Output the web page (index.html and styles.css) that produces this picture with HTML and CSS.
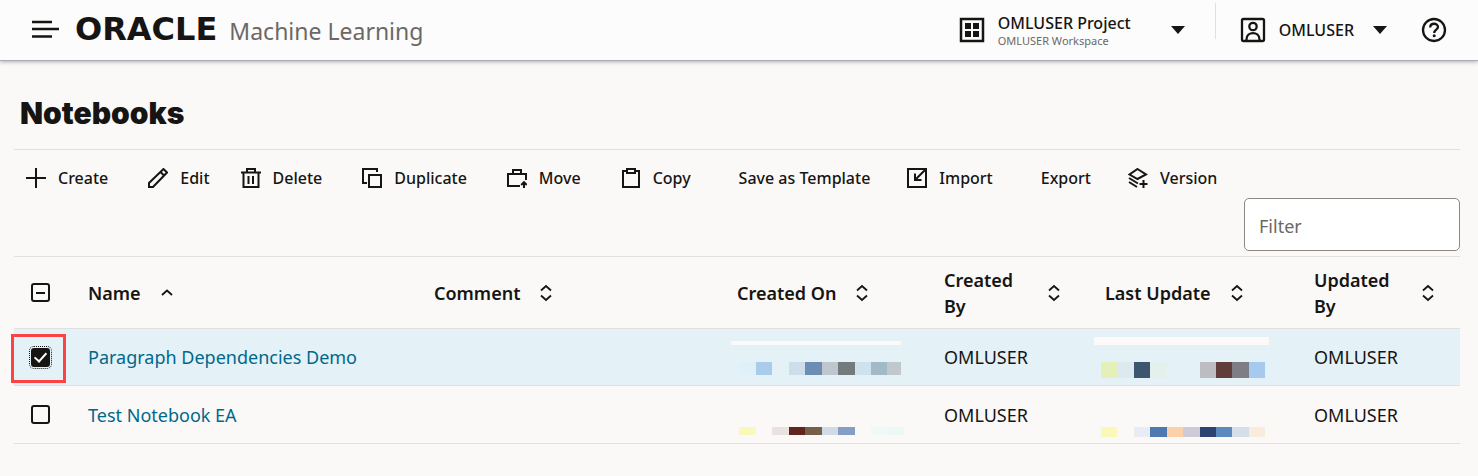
FILE: index.html
```html
<!DOCTYPE html>
<html lang="en">
<head>
<meta charset="utf-8">
<title>Notebooks</title>
<link rel="stylesheet" href="styles.css">
</head>
<body>
<svg class="defs" aria-hidden="true">
  <symbol id="sort" viewBox="0 0 16 18"><path d="M3 6.500 8 2l5 4.500M3 11.500 8 16l5-4.500" fill="none" stroke="currentColor" stroke-width="1.800"/></symbol>
</svg>
<header class="topbar">
  <button class="icon-button menu" aria-label="Navigation menu"><svg width="28" height="20" viewBox="0 0 28 20"><path d="M1 2h20M1 9h27M1 16.500h20" stroke="currentColor" stroke-width="2.300"/></svg></button>
  <div class="brand"><span class="logo">ORACLE</span><span class="product">Machine Learning</span></div>
  <button class="project">
    <svg width="26" height="26" viewBox="0 0 26 26"><path d="M2 2h22v22H2z" fill="none" stroke="currentColor" stroke-width="2.500"/><path d="M6 6h6v6H6zM14 6h6v6h-6zM6 14h6v6H6zM14 14h6v6h-6z" fill="currentColor"/></svg>
    <span class="project-text"><span class="project-name">OMLUSER Project</span><span class="workspace">OMLUSER Workspace</span></span>
    <svg class="caret" width="14" height="8" viewBox="0 0 14 8"><path d="M0 0h14L7 8z" fill="currentColor"/></svg>
  </button>
  <span class="divider"></span>
  <button class="user">
    <svg width="26" height="26" viewBox="0 0 26 26"><g fill="none" stroke="currentColor" stroke-width="2.300"><rect x="2" y="2" width="22" height="22" rx="1.500"/><circle cx="13" cy="9.500" r="3.700"/><path d="M6.500 23.500v-1c0-8.500 13-8.500 13 0v1"/></g></svg>
    <span>OMLUSER</span>
    <svg class="caret" width="14" height="8" viewBox="0 0 14 8"><path d="M0 0h14L7 8z" fill="currentColor"/></svg>
  </button>
  <button class="icon-button help" aria-label="Help"><svg width="26" height="26" viewBox="0 0 26 26"><g fill="none" stroke="currentColor" stroke-width="2.300"><circle cx="13" cy="13" r="11"/><path d="M9.200 10.500c0-5 7.800-4.800 7.800-.5 0 2.800-3.800 2.600-3.800 6"/></g><circle cx="13.200" cy="18.800" r="1.500" fill="currentColor"/></svg></button>
</header>
<main>
  <h1>Notebooks</h1>
  <div class="toolbar" role="toolbar" aria-label="Notebook actions">
    <button class="tool"><svg viewBox="0 0 20 20"><path d="M10 0v20M0 10h20"/></svg>Create</button>
    <button class="tool tight"><svg viewBox="0 0 20 20"><path d="M1 19v-4L15.500 1 19 4.500 5 19zM12.500 4l3.500 3.500"/></svg>Edit</button>
    <button class="tool"><svg viewBox="0 0 20 20"><path d="M0 4.500h20M6 4V1h8v3M2.500 5v14h15V5M7.500 8v8M12 8v8"/></svg>Delete</button>
    <button class="tool"><svg viewBox="0 0 20 20"><path d="M5 15H1V1h14v3M7 7h12v12H7z"/></svg>Duplicate</button>
    <button class="tool"><svg viewBox="0 0 20 20"><path d="M13 18H1V6h18v6M6 6V2h8v4"/><path d="M17 20v-5M14.200 17l2.800-2.800 2.800 2.800"/></svg>Move</button>
    <button class="tool"><svg viewBox="0 0 20 20"><path d="M6 3H2v16h16V3h-4M6 1h8v4H6z"/></svg>Copy</button>
    <button class="tool text-only">Save as Template</button>
    <button class="tool"><svg viewBox="0 0 20 20"><path d="M1 1h18v18H1zM18.500 1.500 8 12M8 5.500V12h6.500"/></svg>Import</button>
    <button class="tool text-only">Export</button>
    <button class="tool"><svg viewBox="0 0 20 20"><path d="M9.500 1 18 6.500 9.500 11 1.500 6.500zM1 10l9 5.500M1 14l8 5M15.500 12v8M11.500 16h8"/></svg>Version</button>
  </div>
  <div class="filter"><input type="text" placeholder="Filter" aria-label="Filter"></div>
  <table>
    <colgroup><col class="c-check"><col class="c-name"><col class="c-comment"><col class="c-created"><col class="c-by"><col class="c-update"><col class="c-by2"></colgroup>
    <thead>
      <tr>
        <th><input type="checkbox" class="box partial" aria-label="Select all notebooks"></th>
        <th><button class="sort"><span>Name</span><svg viewBox="0 0 16 18"><path d="M3 11 8 6.500l5 4.500" fill="none" stroke="currentColor" stroke-width="1.800"/></svg></button></th>
        <th><button class="sort"><span>Comment</span><svg><use href="#sort"/></svg></button></th>
        <th><button class="sort"><span>Created On</span><svg><use href="#sort"/></svg></button></th>
        <th><button class="sort two-line"><span>Created<br>By</span><svg><use href="#sort"/></svg></button></th>
        <th><button class="sort"><span>Last Update</span><svg><use href="#sort"/></svg></button></th>
        <th><button class="sort two-line"><span>Updated<br>By</span><svg><use href="#sort"/></svg></button></th>
      </tr>
    </thead>
    <tbody>
      <tr class="selected">
        <td class="marked"><input type="checkbox" class="box focused" aria-label="Select Paragraph Dependencies Demo" checked></td>
        <td><a href="#">Paragraph Dependencies Demo</a></td>
        <td></td>
        <td class="redacted"><svg width="190" height="56" viewBox="0 0 190 56" shape-rendering="crispEdges"><path fill="#fbfaf8" d="M6 12h170v4H6z"/><path fill="#e0f0f8" d="M15 33h16v13H15z"/><path fill="#a8ccea" d="M31 33h16v13H31z"/><path fill="#cddde9" d="M64 33h16v13H64z"/><path fill="#6d8db5" d="M80 33h17v13H80z"/><path fill="#bfc7ce" d="M97 33h16v13H97z"/><path fill="#757b7d" d="M113 33h17v13h-17z"/><path fill="#cde1ee" d="M130 33h16v13h-16z"/><path fill="#a2bac8" d="M146 33h16v13h-16z"/><path fill="#c0c8cb" d="M162 33h14v13h-14z"/></svg></td>
        <td>OMLUSER</td>
        <td class="redacted"><svg width="190" height="56" viewBox="0 0 190 56" shape-rendering="crispEdges"><path fill="#fbfaf8" d="M1 8h175v8H1z"/><path fill="#e4f0b8" d="M8 33h16v16H8z"/><path fill="#dceaf0" d="M24 33h17v16H24z"/><path fill="#3e5570" d="M41 33h16v16H41z"/><path fill="#e3f0ec" d="M57 33h17v16H57z"/><path fill="#bbbdc2" d="M107 33h16v16h-16z"/><path fill="#603d3b" d="M123 33h16v16h-16z"/><path fill="#7e7c85" d="M139 33h17v16h-17z"/><path fill="#a6caef" d="M156 33h16v16h-16z"/></svg></td>
        <td>OMLUSER</td>
      </tr>
      <tr>
        <td><input type="checkbox" class="box" aria-label="Select Test Notebook EA"></td>
        <td><a href="#">Test Notebook EA</a></td>
        <td></td>
        <td class="redacted"><svg width="190" height="57" viewBox="0 0 190 57" shape-rendering="crispEdges"><path fill="#fbf9b9" d="M14 41h17v8H14z"/><path fill="#eae2e1" d="M47 41h17v8H47z"/><path fill="#60261d" d="M64 41h16v8H64z"/><path fill="#75604c" d="M80 41h17v8H80z"/><path fill="#d2dae8" d="M97 41h16v8H97z"/><path fill="#839fc6" d="M113 41h17v8h-17z"/><path fill="#f1f8f8" d="M146 41h16v8h-16z"/><path fill="#ebf8f6" d="M162 41h17v8h-17z"/></svg></td>
        <td>OMLUSER</td>
        <td class="redacted"><svg width="190" height="57" viewBox="0 0 190 57" shape-rendering="crispEdges"><path fill="#fbf8b9" d="M8 41h16v10H8z"/><path fill="#e9ecf4" d="M41 41h16v10H41z"/><path fill="#4e78b0" d="M57 41h17v10H57z"/><path fill="#fbd1a9" d="M74 41h16v10H74z"/><path fill="#cccbd6" d="M90 41h17v10H90z"/><path fill="#2e4173" d="M107 41h16v10h-16z"/><path fill="#5b89bd" d="M123 41h16v10h-16z"/><path fill="#d3dee8" d="M139 41h17v10h-17z"/><path fill="#faecda" d="M156 41h16v10h-16z"/></svg></td>
        <td>OMLUSER</td>
      </tr>
    </tbody>
  </table>
</main>
</body>
</html>
```
FILE: styles.css
```css
* { box-sizing: border-box; }
body {
  margin: 0;
  background: #fbf9f8;
  color: #161513;
  font-family: "Noto Sans", "Open Sans", sans-serif;
  font-size: 18px;
}
.defs { position: absolute; width: 0; height: 0; }
button {
  display: flex;
  align-items: center;
  border: 0;
  padding: 0;
  background: none;
  color: inherit;
  font-family: inherit;
  text-align: left;
  white-space: nowrap;
}
svg { display: block; flex: none; }

.topbar {
  display: flex;
  align-items: center;
  height: 61px;
  padding: 0 31px;
  background: #fcfcfc;
  border-bottom: 1px solid #a9aebd;
  box-shadow: 0 1px 4px rgba(0, 0, 0, 0.3);
}
.brand { display: flex; flex: 1; align-items: baseline; gap: 12px; margin-left: 16px; }
.logo { font: bold 32px/40px "DejaVu Sans", sans-serif; }
.product { font-size: 23px; line-height: 40px; color: #6b6866; }
.project { gap: 13px; padding-right: 30px; }
.project-text { display: flex; flex-direction: column; width: 144px; }
.project-name { font-size: 16px; font-weight: 500; line-height: 20px; padding-top: 2px; }
.workspace { font-size: 11px; line-height: 16px; color: #6b6866; }
.project .caret { margin-left: 16px; }
.divider {
  align-self: flex-start;
  width: 1px;
  height: 36px;
  margin: 3px 24px 0 0;
  background: #e2e0de;
}
.user { gap: 13px; font-size: 16px; font-weight: 500; }
.user .caret { margin-left: 6px; }
.help { margin-left: 34px; }

main { padding: 32px 18px 32px 14px; }
h1 {
  margin: 0 0 16px;
  padding-left: 6px;
  font: 900 30px/40px Inter, sans-serif;
}
.toolbar {
  display: flex;
  align-items: center;
  gap: 16px;
  height: 49px;
  padding-top: 7px;
  border-top: 1px solid #e2e0de;
}
.tool { gap: 12px; padding: 0 12px; height: 40px; font-size: 16px; font-weight: 500; }
.tool svg { width: 20px; height: 20px; fill: none; stroke: currentColor; stroke-width: 2; }
.tight { padding-right: 3px; }
.text-only { padding: 0 9px 0 20px; }
.filter { display: flex; justify-content: flex-end; padding-bottom: 5px; }
.filter input {
  width: 216px;
  height: 53px;
  padding: 2px 14px 0;
  border: 1px solid #8b8886;
  border-radius: 5px;
  background: #fff;
  font: inherit;
}
.filter input::placeholder { color: #6b6866; opacity: 1; }

table { width: 100%; table-layout: fixed; border-collapse: collapse; border-top: 1px solid #e2e0de; }
.c-check { width: 62px; }
.c-name { width: 346px; }
.c-comment { width: 303px; }
.c-created { width: 207px; }
.c-by { width: 161px; }
.c-update { width: 209px; }
.c-by2 { width: 158px; }
th, td { padding: 0 12px; text-align: left; border-bottom: 1px solid #e2e0de; }
th { height: 72px; }
td { height: 58px; }
.selected td { height: 57px; }
td.redacted { padding: 0; vertical-align: top; }
td a { color: #00688c; text-decoration: none; }
.selected { background: #e4f1f7; }
.sort { gap: 18px; font-size: 18px; font-weight: 600; line-height: 26px; }
.sort svg { width: 16px; height: 18px; }
.two-line span { min-width: 84px; }
th:last-child .two-line span { min-width: 88px; }

.box {
  appearance: none;
  display: block;
  width: 19px;
  height: 19px;
  margin: 0 0 0 5px;
  border: 2px solid #161513;
  border-radius: 3px;
}
.partial { display: grid; place-items: center; }
.partial::after { content: ""; width: 9px; height: 2px; background: #161513; }
.box:checked { display: grid; place-items: center; background: #161513; }
.box:checked::after {
  content: "";
  width: 5px;
  height: 10px;
  border: solid #fff;
  border-width: 0 2px 2px 0;
  transform: translateY(-1px) rotate(42deg);
}
.focused { outline: 1px dotted #161513; outline-offset: 1px; }
.marked { position: relative; }
.marked::before {
  content: "";
  position: absolute;
  inset: 5px 10px 2px -3px;
  border: 3px solid #fc4343;
}
```
